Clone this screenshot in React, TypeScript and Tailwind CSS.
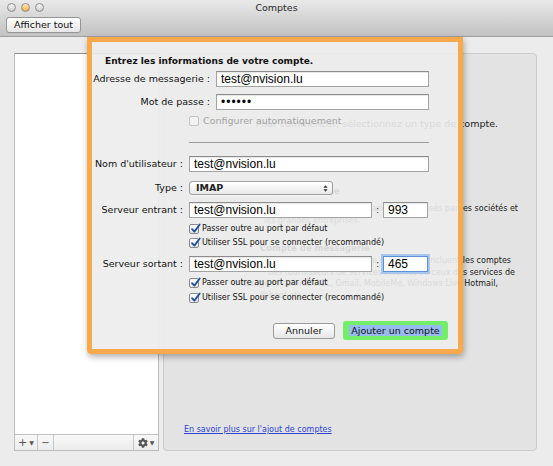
import { FaCog } from "react-icons/fa";

const ui = "font-['DejaVu_Sans',sans-serif]";
const mono = "font-['Liberation_Sans',Arial,sans-serif]";

function Light({ color }: { color: string }) {
  return (
    <span
      className="inline-block h-[9px] w-[9px] rounded-full border border-[#8f8f8f] shadow-[inset_0_1px_1px_rgba(255,255,255,0.8)]"
      style={{ background: color }}
    />
  );
}

function Check({ checked = true, disabled = false }: { checked?: boolean; disabled?: boolean }) {
  return (
    <span
      className={
        disabled
          ? "relative inline-block h-[10px] w-[10px] shrink-0 rounded-[2px] border border-[#c4c4c4] bg-[#f2f2f2]"
          : "relative inline-block h-[10px] w-[10px] shrink-0 rounded-[2px] border border-[#8a8a8a] bg-gradient-to-b from-white to-[#e4e4e4]"
      }
    >
      {checked && (
        <svg viewBox="0 0 12 12" className="absolute left-[0px] top-[-2px] h-[11px] w-[11px]">
          <path
            d="M2.2 6.6 L4.8 9.4 L10.6 1.6"
            fill="none"
            stroke="#1d4c98"
            strokeWidth="1.9"
            strokeLinecap="round"
            strokeLinejoin="round"
          />
        </svg>
      )}
    </span>
  );
}

function Field({ value, width, focused = false, dots = false }: { value: string; width: string; focused?: boolean; dots?: boolean }) {
  return (
    <div
      className={`${width} h-[16px] shrink-0 border bg-white pl-[4px] text-[12px] leading-[14px] text-black ${mono} ${
        focused
          ? "border-[#5d8fd4] shadow-[0_0_0_2px_#a9c6ef]"
          : "border-[#a3a3a3] border-t-[#8c8c8c] shadow-[inset_0_1px_1px_rgba(0,0,0,0.1)]"
      } ${dots ? "tracking-[1px]" : ""}`}
    >
      {value}
    </div>
  );
}

function Row({ label, labelW, children }: { label: string; labelW: string; children: React.ReactNode }) {
  return (
    <div className="flex items-center">
      <div className={`${labelW} shrink-0 whitespace-nowrap pr-[6px] text-right text-[9.5px] text-[#111]`}>{label}</div>
      {children}
    </div>
  );
}

function CheckRow({ label }: { label: string }) {
  return (
    <div className="flex h-[12px] items-center gap-[3px] pl-[97px] text-[8px] text-[#111]">
      <Check />
      <span className="whitespace-nowrap">{label}</span>
    </div>
  );
}

export default function App() {
  return (
    <div className={`relative h-[466px] w-[553px] overflow-hidden bg-[#ececec] ${ui}`}>
      {/* title bar + toolbar */}
      <header className="h-[37px] border-b border-[#a0a0a0] bg-gradient-to-b from-[#e9e9e9] to-[#c2c2c2] px-[6px] pt-[2px]">
        <div className="grid h-[11px] grid-cols-[1fr_auto_1fr] items-center">
          <div className="flex items-center gap-[5px] pl-[1px]">
            <Light color="radial-gradient(circle at 50% 35%, #f4f4f4, #bdbdbd)" />
            <Light color="radial-gradient(circle at 50% 35%, #fde2a0, #f09a20)" />
            <Light color="radial-gradient(circle at 50% 35%, #f4f4f4, #bdbdbd)" />
          </div>
          <div className="text-[9.5px] leading-[11px] text-[#2a2a2a]">Comptes</div>
          <div />
        </div>
        <button className="mt-[4px] flex h-[16px] w-[75px] items-center justify-center rounded-[3px] border border-[#959595] bg-gradient-to-b from-white to-[#e6e6e6] text-[9.5px] text-[#111]">
          Afficher tout
        </button>
      </header>

      <main className="flex gap-[4px] px-[14px] pt-[16px]">
        {/* accounts list */}
        <div className="flex h-[398px] w-[145px] flex-col border border-[#bcbcbc] border-t-[#8e8e8e]">
          <div className="flex-1 bg-white" />
          <div className="flex h-[16px] items-center border-t border-[#c2c2c2] bg-gradient-to-b from-[#f8f8f8] to-[#ececec] text-[#555]">
            <div className="flex h-full w-[23px] items-center justify-center gap-[2px] border-r border-[#c6c6c6] text-[11px] leading-none">
              <span>+</span>
              <span className="text-[6px]">▼</span>
            </div>
            <div className="flex h-full w-[16px] items-center justify-center border-r border-[#c6c6c6] text-[10px] leading-none">−</div>
            <div className="flex-1" />
            <div className="flex h-full w-[25px] items-center justify-center gap-[2px] border-l border-[#c6c6c6]">
              <FaCog className="h-[10px] w-[10px] text-[#555]" />
              <span className="text-[6px]">▼</span>
            </div>
          </div>
        </div>

        {/* right panel */}
        <div className="flex h-[398px] w-[374px] flex-col rounded-[4px] border border-[#cbcbcb] bg-[#e3e3e3] pt-[64px] text-[#1a1a1a]">
          <div className="w-[354px] whitespace-nowrap pr-[20px] text-right text-[9.5px] leading-[12px]">
            Pour commencer, sélectionnez un type de compte.
          </div>
          <div className="mt-[55px] w-[354px] leading-[12px]">
            <div className="pl-[90px] text-[8.5px] font-bold">Compte Exchange</div>
            <div className="mt-[6px] whitespace-nowrap text-right text-[8px]">Les comptes Exchange sont utilisés par les sociétés et</div>
            <div className="whitespace-nowrap pl-[100px] text-[8px]">les grandes entreprises.</div>
          </div>
          <div className="mt-[15px] w-[354px] leading-[11.5px]">
            <div className="pl-[96px] text-[8.5px] font-bold leading-[13px]">Compte de messagerie</div>
            <div className="whitespace-nowrap pr-[7px] text-right text-[8px]">Les comptes de messagerie incluent les comptes</div>
            <div className="whitespace-nowrap pr-[3px] text-right text-[8px]">des fournisseurs de services Internet ou ceux des services de</div>
            <div className="whitespace-nowrap pr-[20px] text-right text-[8px]">messagerie comme AOL, Gmail, MobileMe, Windows Live Hotmail,</div>
            <div className="whitespace-nowrap pl-[96px] text-[8px]">Yahoo! etc.</div>
          </div>
          <a className="mt-auto mb-[15px] ml-[20px] text-[8px] leading-[10px] text-[#2b43d2] underline">
            En savoir plus sur l'ajout de comptes
          </a>
        </div>
      </main>

      {/* sheet */}
      <div className="absolute left-[87px] top-[37px] flex h-[317px] w-[376px] flex-col rounded-b-[4px] border-[5px] border-[#f8a94b] bg-[#ececec]/90 shadow-[1px_3px_6px_rgba(0,0,0,0.3)]">
        <div className="pl-[13px] pt-[13px] text-[9px] font-bold leading-[12px] text-[#111]">
          Entrez les informations de votre compte.
        </div>

        <div className="mt-[4px]">
          <Row label="Adresse de messagerie :" labelW="w-[124px]">
            <Field value="test@nvision.lu" width="w-[213px]" />
          </Row>
        </div>
        <div className="mt-[7px]">
          <Row label="Mot de passe :" labelW="w-[124px]">
            <Field value="••••••" width="w-[213px]" dots />
          </Row>
        </div>
        <div className="mt-[5px] flex h-[12px] items-center gap-[4px] pl-[97px] text-[9.5px] text-[#a3a3a3]">
          <Check checked={false} disabled />
          <span>Configurer automatiquement</span>
        </div>
        <div className="ml-[97px] mt-[15px] h-px w-[240px] bg-[#9d9d9d]" />

        <div className="mt-[13px]">
          <Row label="Nom d'utilisateur :" labelW="w-[97px]">
            <Field value="test@nvision.lu" width="w-[240px]" />
          </Row>
        </div>
        <div className="mt-[9px]">
          <Row label="Type :" labelW="w-[97px]">
            <div className="flex h-[14px] w-[144px] items-center justify-between rounded-[3px] border border-[#9e9e9e] bg-gradient-to-b from-white to-[#e9e9e9] pl-[6px] pr-[4px] shadow-[0_1px_0_rgba(255,255,255,0.6)]">
              <span className="text-[9.5px] font-semibold leading-none text-[#222]">IMAP</span>
              <svg viewBox="0 0 6 10" className="h-[9px] w-[5px]">
                <path d="M0.5 4 L3 1 L5.5 4 Z M0.5 6 L3 9 L5.5 6 Z" fill="#333" />
              </svg>
            </div>
          </Row>
        </div>
        <div className="mt-[7px]">
          <Row label="Serveur entrant :" labelW="w-[97px]">
            <Field value="test@nvision.lu" width="w-[183px]" />
            <span className="w-[11px] text-center text-[9.5px] text-[#333]">:</span>
            <Field value="993" width="w-[45px]" />
          </Row>
        </div>
        <div className="mt-[5px]">
          <CheckRow label="Passer outre au port par défaut" />
        </div>
        <div className="mt-[2px]">
          <CheckRow label="Utiliser SSL pour se connecter (recommandé)" />
        </div>
        <div className="mt-[7px]">
          <Row label="Serveur sortant :" labelW="w-[97px]">
            <Field value="test@nvision.lu" width="w-[183px]" />
            <span className="w-[11px] text-center text-[9.5px] text-[#333]">:</span>
            <Field value="465" width="w-[45px]" focused />
          </Row>
        </div>
        <div className="mt-[5px]">
          <CheckRow label="Passer outre au port par défaut" />
        </div>
        <div className="mt-[3px]">
          <CheckRow label="Utiliser SSL pour se connecter (recommandé)" />
        </div>

        <div className="mt-[17px] flex items-center justify-end gap-[8px] pr-[10px]">
          <button className="flex h-[16px] w-[62px] items-center justify-center rounded-[3px] border border-[#9a9a9a] bg-gradient-to-b from-white to-[#e7e7e7] text-[9.5px] text-[#111]">
            Annuler
          </button>
          <button className="flex h-[19px] w-[105px] items-center justify-center rounded-[3px] bg-[#72ee69]">
            <span className="bg-[#97bbef] px-[2px] text-[9.5px] leading-[11px] text-[#111]">Ajouter un compte</span>
          </button>
        </div>
      </div>
    </div>
  );
}
